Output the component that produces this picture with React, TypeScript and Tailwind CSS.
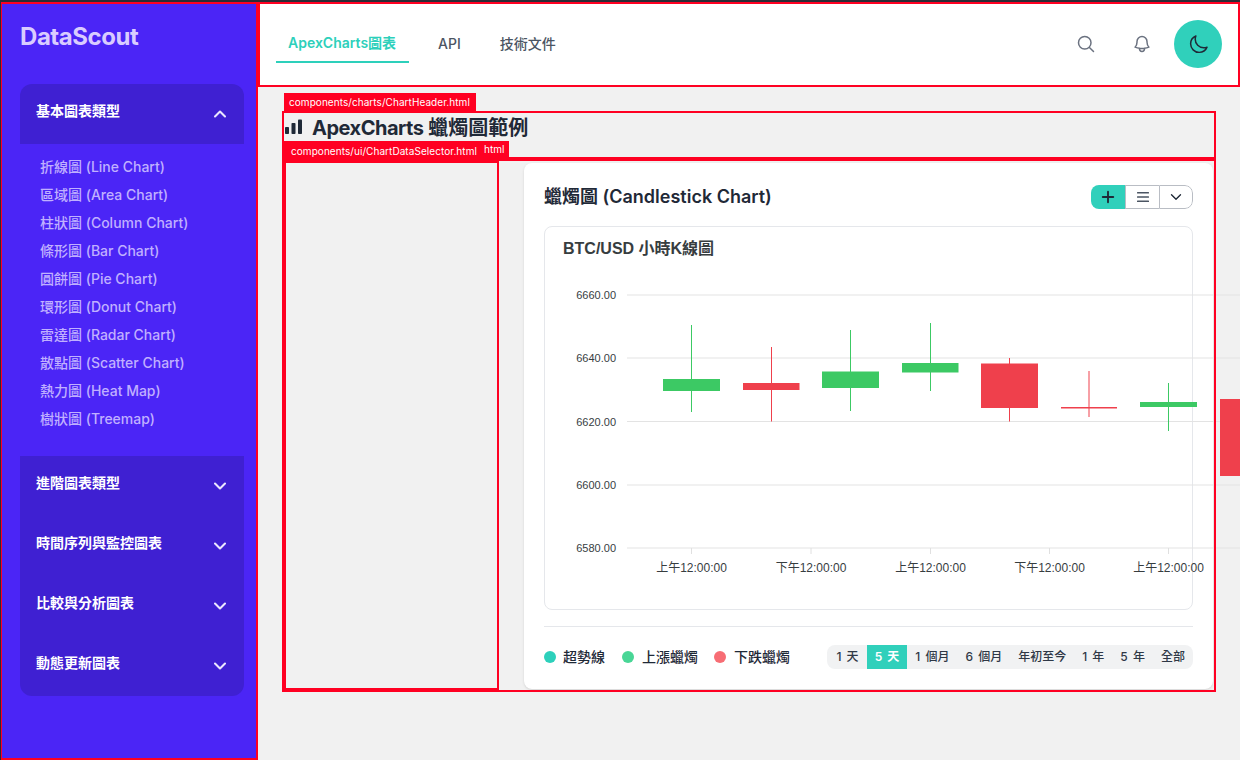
import { Plus, ChevronUp, ChevronDown } from "lucide-react";
import { HiOutlineBell, HiOutlineMagnifyingGlass, HiOutlineMoon } from "react-icons/hi2";

const font = "font-['Inter','Noto_Sans_CJK_TC',sans-serif]";

const basicCharts = [
  "折線圖 (Line Chart)",
  "區域圖 (Area Chart)",
  "柱狀圖 (Column Chart)",
  "條形圖 (Bar Chart)",
  "圓餅圖 (Pie Chart)",
  "環形圖 (Donut Chart)",
  "雷達圖 (Radar Chart)",
  "散點圖 (Scatter Chart)",
  "熱力圖 (Heat Map)",
  "樹狀圖 (Treemap)",
];

const otherGroups = ["進階圖表類型", "時間序列與監控圖表", "比較與分析圖表", "動態更新圖表"];

const ranges = ["1 天", "5 天", "1 個月", "6 個月", "年初至今", "1 年", "5 年", "全部"];

const GREEN = "#3cc964";
const RED = "#ef404c";

const candles = [
  { x: 691.5, hi: 325, lo: 412, top: 379, bottom: 391, left: 663, right: 720, color: GREEN },
  { x: 771.5, hi: 347, lo: 421.5, top: 383, bottom: 390, left: 743, right: 799.5, color: RED },
  { x: 850.5, hi: 330, lo: 411, top: 371.5, bottom: 388, left: 822, right: 879, color: GREEN },
  { x: 930.5, hi: 323, lo: 391, top: 363, bottom: 372.5, left: 902, right: 958.5, color: GREEN },
  { x: 1009.5, hi: 358, lo: 421.5, top: 363.5, bottom: 408, left: 981, right: 1038, color: RED },
  { x: 1089, hi: 371, lo: 417, top: 407, bottom: 408.5, left: 1061, right: 1117, color: RED },
  { x: 1168.5, hi: 383, lo: 431, top: 402, bottom: 407, left: 1140, right: 1197, color: GREEN },
  { x: 1248.5, hi: 399, lo: 476, top: 399, bottom: 476, left: 1220, right: 1277, color: RED },
];

const yTicks = [
  { y: 295, label: "6660.00" },
  { y: 358, label: "6640.00" },
  { y: 421.5, label: "6620.00" },
  { y: 485, label: "6600.00" },
  { y: 548, label: "6580.00" },
];

const xTicks = [
  { x: 691.5, label: "上午12:00:00" },
  { x: 811, label: "下午12:00:00" },
  { x: 930.5, label: "上午12:00:00" },
  { x: 1049.5, label: "下午12:00:00" },
  { x: 1168.5, label: "上午12:00:00" },
];

function DebugBox({ className }: { className: string }) {
  return <div className={`pointer-events-none absolute z-10 border-2 border-[#ff0022] ${className}`} />;
}

function DebugLabel({ text, className }: { text: string; className: string }) {
  return (
    <div className={`absolute z-20 bg-[#ff0022] text-[10px] tracking-[0.06px] text-white ${className}`}>
      {text}
    </div>
  );
}

function CandleChart() {
  return (
    <svg
      width="649"
      height="384"
      viewBox="544 226 649 384"
      className="absolute left-[-1px] top-[-1px] overflow-visible"
    >
      {yTicks.map((t) => (
        <g key={t.label}>
          <line x1="627" x2="1260" y1={t.y} y2={t.y} stroke="#e3e3e3" strokeWidth="1" />
          <text
            x="616"
            y={t.y + 4}
            textAnchor="end"
            fontSize="11"
            fill="#373d3f"
            fontFamily="'Liberation Sans', sans-serif"
          >
            {t.label}
          </text>
        </g>
      ))}
      {xTicks.map((t) => (
        <g key={t.x}>
          <line x1={t.x} x2={t.x} y1="548" y2="554" stroke="#e0e0e0" />
          <text
            x={t.x}
            y="572"
            textAnchor="middle"
            fontSize="12"
            fill="#373d3f"
            fontFamily="'Liberation Sans', 'Noto Sans CJK TC', sans-serif"
          >
            {t.label}
          </text>
        </g>
      ))}
      {candles.map((c) => (
        <g key={c.x}>
          <line x1={c.x} x2={c.x} y1={c.hi} y2={c.lo} stroke={c.color} strokeWidth="1" />
          <rect x={c.left} y={c.top} width={c.right - c.left} height={c.bottom - c.top} fill={c.color} />
        </g>
      ))}
    </svg>
  );
}

export default function App() {
  return (
    <div className={`relative flex h-[760px] w-[1240px] overflow-hidden bg-[#f1f1f1] ${font}`}>
      <div className="absolute inset-x-0 top-0 z-30 h-[2px] bg-[#2b2b36]" />
      <div className="absolute inset-y-0 left-0 z-30 w-px bg-[#2b2b36]" />

      <aside className="relative flex w-[258px] shrink-0 flex-col bg-[#4b25f6] pt-[21px] pr-[14px] pl-5">
        <DebugBox className="inset-0 top-[2px]" />
        <div className="text-2xl leading-8 font-bold tracking-[-0.45px] text-[#d9ccff]">DataScout</div>

        <div className="mt-[31px] flex h-[60px] items-start justify-between rounded-t-xl bg-[#3f20d2] pt-[17px] pr-[14px] pl-4">
          <span className="text-sm leading-5 font-semibold text-white">基本圖表類型</span>
          <ChevronUp className="mt-[3px] size-5 text-[#ebe6ff]" strokeWidth={2.5} />
        </div>
        <ul className="flex flex-col pt-[9px] pb-[23px] pl-5">
          {basicCharts.map((name) => (
            <li key={name} className="h-7 text-sm leading-7 font-medium text-[#c0b0ff]">
              {name}
            </li>
          ))}
        </ul>
        <div className="flex flex-col overflow-hidden rounded-b-xl bg-[#3f20d2]">
          {otherGroups.map((name) => (
            <div key={name} className="flex h-[60px] items-start justify-between pt-[17px] pr-[14px] pl-4">
              <span className="text-sm leading-5 font-semibold text-white">{name}</span>
              <ChevronDown className="mt-[3px] size-5 text-[#ebe6ff]" strokeWidth={2.5} />
            </div>
          ))}
        </div>
      </aside>

      <div className="flex min-w-0 flex-1 flex-col">
        <header className="relative mt-[2px] flex h-[85px] shrink-0 items-center justify-between bg-white px-[18px]">
          <DebugBox className="inset-0" />
          <nav className="flex h-full items-center gap-4">
            <span className="flex h-[37px] w-[133px] items-center border-b-2 border-[#2dd0bb] px-3 pb-px text-sm font-semibold text-[#2dd0bb]">
              ApexCharts圖表
            </span>
            <span className="mb-[2px] ml-px px-3 text-sm font-medium text-[#4b5563]">API</span>
            <span className="mb-[2px] -ml-px px-3 text-sm font-medium text-[#4b5563]">技術文件</span>
          </nav>
          <div className="mb-px flex items-center">
            <HiOutlineMagnifyingGlass className="mr-9 size-5 text-[#6b7280]" strokeWidth={1.8} />
            <HiOutlineBell className="mr-[22px] size-5 text-[#6b7280]" strokeWidth={1.8} />
            <span className="flex size-12 items-center justify-center rounded-full bg-[#30d0bb]">
              <HiOutlineMoon className="size-[21px] text-[#1f2937]" strokeWidth={1.7} />
            </span>
          </div>
        </header>

        <div className="relative flex min-h-0 flex-1 flex-col pl-[24px]">
          <DebugLabel text="components/charts/ChartHeader.html" className="top-[6px] left-[26px] h-[19px] w-[192px] pl-[5px] leading-[18px]" />
          <section className="relative mt-[24px] flex h-[48px] w-[934px] items-start gap-[9px] pt-[3px] pl-[3px]">
            <DebugBox className="inset-0" />
            <svg width="18" height="16" viewBox="0 0 18 16" className="mt-[5px] fill-[#1f2937]">
              <rect x="0" y="8" width="4" height="7" rx="0.8" />
              <rect x="6.5" y="4" width="4" height="11" rx="0.8" />
              <rect x="13" y="0.5" width="4" height="14.5" rx="0.8" />
            </svg>
            <h1 className="text-xl leading-7 font-bold text-[#1f2937]">
              <span className="tracking-[-0.5px]">ApexCharts</span> 蠟燭圖範例
            </h1>
          </section>
          <DebugLabel text="components/ui/ChartDataSelector.html" className="top-[54px] left-[26px] h-[22px] w-[194px] pl-[7px] leading-[20px]" />
          <DebugLabel text="html" className="top-[54px] left-[220px] h-[18px] w-[31px] pl-[6px] leading-[16px]" />

          <div className="relative flex h-[533px] w-[934px] p-[2px]">
            <DebugBox className="inset-0" />
            <div className="relative h-[529px] w-[215px] shrink-0">
              <DebugBox className="inset-0" />
            </div>
            <div className="mt-[2px] ml-[25px] flex h-[526px] w-[689px] flex-col rounded-lg bg-white px-5 shadow-sm">
              <div className="flex h-[63px] shrink-0 items-center justify-between pt-[5px]">
                <h2 className="text-lg font-semibold text-[#1f2937]">蠟燭圖 (Candlestick Chart)</h2>
                <div className="flex h-6 overflow-hidden rounded-lg bg-white">
                  <span className="flex w-[34px] items-center justify-center bg-[#30d0bb]">
                    <Plus className="size-[18px] text-[#1f2937]" strokeWidth={2.5} />
                  </span>
                  <span className="flex w-[34px] items-center justify-center border-y border-l border-[#b9bdc4]">
                    <svg width="12" height="10" viewBox="0 0 12 10" className="fill-[#4b5563]">
                      <rect x="0" y="0" width="12" height="1.6" rx="0.5" />
                      <rect x="0" y="4.2" width="12" height="1.6" rx="0.5" />
                      <rect x="0" y="8.4" width="12" height="1.6" rx="0.5" />
                    </svg>
                  </span>
                  <span className="flex w-[34px] items-center justify-center rounded-r-lg border border-[#b9bdc4]">
                    <ChevronDown className="size-[18px] text-[#1f2937]" strokeWidth={1.8} />
                  </span>
                </div>
              </div>
              <div className="relative h-[384px] shrink-0 rounded-lg border border-[#e5e7eb]">
                <div className="pt-[12px] pl-[18px] font-['Liberation_Sans','Noto_Sans_CJK_TC',sans-serif] text-base leading-5 font-bold text-[#373d3f]">
                  BTC/USD 小時K線圖
                </div>
                <CandleChart />
              </div>
              <div className="mt-4 flex items-center justify-between border-t border-[#e5e7eb] pt-[18px]">
                <div className="flex items-center text-sm font-medium text-[#1f2937]">
                  <span className="size-3 rounded-full bg-[#2dd0bb]" />
                  <span className="ml-[7px]">超勢線</span>
                  <span className="ml-[17px] size-3 rounded-full bg-[#49d696]" />
                  <span className="ml-2">上漲蠟燭</span>
                  <span className="ml-4 size-3 rounded-full bg-[#f76d74]" />
                  <span className="ml-2">下跌蠟燭</span>
                </div>
                <div className="flex h-6 items-center overflow-hidden rounded-lg bg-[#f1f2f3] pl-px text-xs font-medium text-[#2f3846] [word-spacing:2px]">
                  {ranges.map((r) =>
                    r === "5 天" ? (
                      <span key={r} className="flex h-full items-center bg-[#30d0bb] px-2 font-semibold text-white">
                        {r}
                      </span>
                    ) : (
                      <span key={r} className="flex h-full items-center px-2">
                        {r}
                      </span>
                    )
                  )}
                </div>
              </div>
            </div>
          </div>
        </div>
      </div>
    </div>
  );
}
